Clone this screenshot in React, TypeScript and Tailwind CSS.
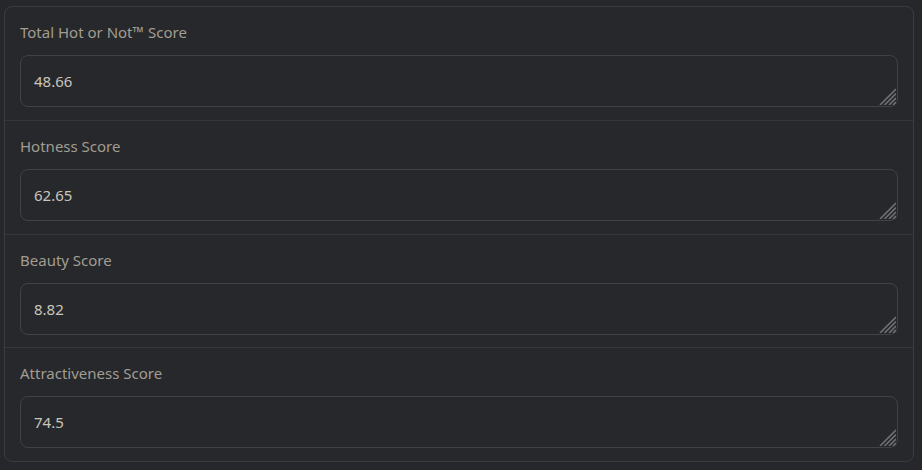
const rows = [
  { label: "Total Hot or Not™ Score", value: "48.66", h: "h-[114px] border-b" },
  { label: "Hotness Score", value: "62.65", h: "h-[114px] border-b" },
  { label: "Beauty Score", value: "8.82", h: "h-[113px] border-b" },
  { label: "Attractiveness Score", value: "74.5", h: "h-[113px]" },
];

function Grip() {
  return (
    <svg
      className="pointer-events-none absolute right-[2px] bottom-[2px]"
      width="17"
      height="17"
      viewBox="0 0 17 17"
      fill="none"
      stroke="#6e6f72"
      strokeWidth="1.6"
    >
      <path d="M1 17L17 1M5.5 17L17 5.5M10 17L17 10M14 17L17 14" />
    </svg>
  );
}

export default function App() {
  return (
    <div className="min-h-[470px] w-[922px] bg-[#26272a] pt-[6px] pl-[4px] font-['Noto_Sans',sans-serif]">
      <div className="w-[910px] overflow-hidden rounded-lg border border-[#3b3c40] bg-[#27282b]">
        {rows.map((row) => (
          <div key={row.label} className={`${row.h} border-[#35363a] px-[15px] pt-[14px]`}>
            <div className="mb-[12px] text-[15px] leading-[22px] text-[#a29d92]">{row.label}</div>
            <div className="relative w-[878px]">
              <textarea
                readOnly
                value={row.value}
                rows={1}
                className="block h-[52px] w-full resize-none rounded-lg border border-[#414246] bg-[#27282b] px-[13px] py-[13px] text-[15px] leading-[24px] text-[#c9c5bb] outline-none"
              />
              <Grip />
            </div>
          </div>
        ))}
      </div>
    </div>
  );
}
